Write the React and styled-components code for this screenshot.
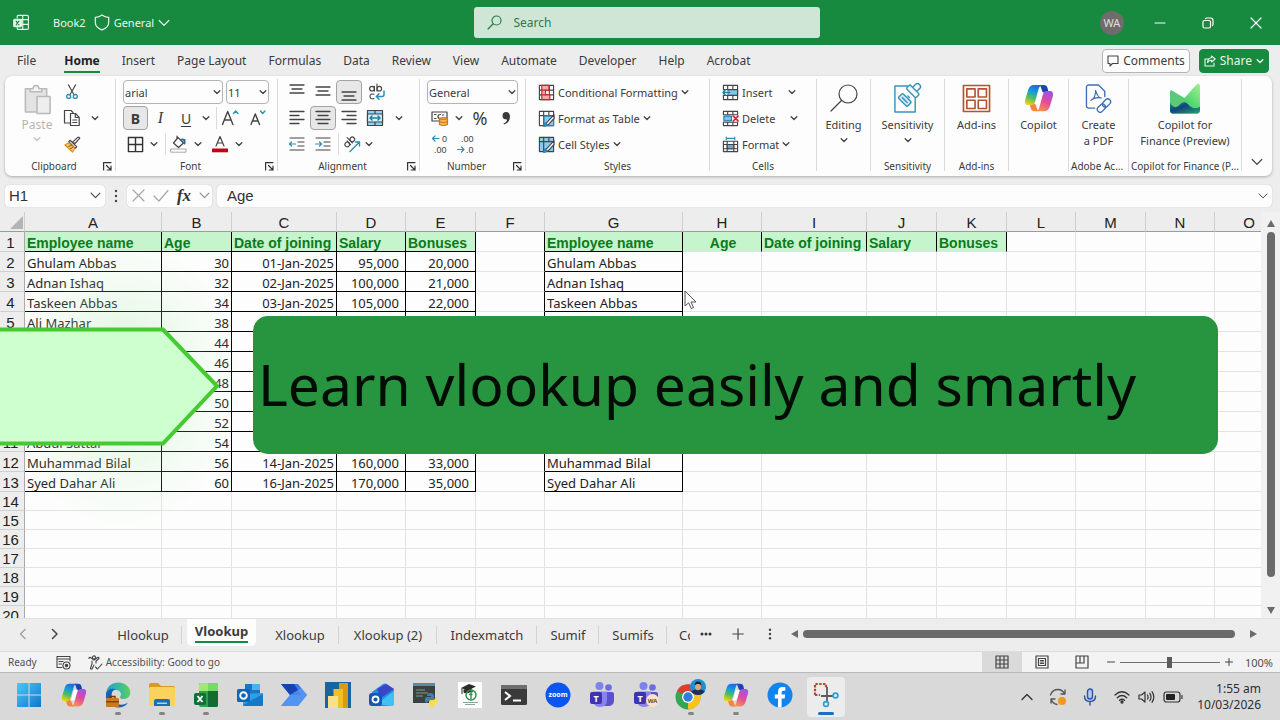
import React from "react";
import styled, { createGlobalStyle, css } from "styled-components";

const UI = `"Noto Sans", "Open Sans", sans-serif`;
const ARIAL = `"Liberation Sans", Arial, sans-serif`;
const GREEN = "#178a3f";
const INK = "#3b3b3b";

const Global = createGlobalStyle`
  * { box-sizing: border-box; }
  body { margin: 0; background: #ededed; font-family: ${UI}; color: ${INK}; }
  button, input, select { font: inherit; color: inherit; margin: 0; }
  svg { display: block; flex: none; }
`;

const Page = styled.div`
  position: relative;
  display: flex;
  flex-direction: column;
  height: 100vh;
  overflow: hidden;
  background: #ededed;
`;

const PlainButton = styled.button`
  display: flex;
  align-items: center;
  justify-content: center;
  border: 0;
  padding: 0;
  background: none;
`;

/* ---------- title bar ---------- */
const TitleBar = styled.header`
  display: grid;
  grid-template-columns: 1fr 346px 1fr;
  align-items: center;
  flex: none;
  height: 45px;
  padding-left: 13px;
  background: ${GREEN};
  color: #e9f7ed;
  font-size: 11px;
`;
const TitleLeft = styled.div`
  display: flex;
  align-items: center;
`;
const BookName = styled.span`
  margin: 0 8px 0 23px;
`;
const LabelButton = styled(PlainButton)`
  gap: 4px;
`;
const SearchBox = styled.label`
  display: flex;
  align-items: center;
  gap: 12px;
  height: 31px;
  padding-left: 13px;
  border-radius: 3px;
  background: #cfe6d7;
  color: #2b7a49;
`;
const SearchInput = styled.input`
  flex: 1;
  min-width: 0;
  border: 0;
  padding: 0;
  background: none;
  outline: 0;
  font-size: 12px;
  &::placeholder { color: #2b7a49; opacity: 1; }
`;
const TitleRight = styled.div`
  display: flex;
  align-items: center;
  justify-content: flex-end;
`;
const Avatar = styled.span`
  display: grid;
  place-items: center;
  width: 24px;
  height: 24px;
  margin-right: 12px;
  border-radius: 50%;
  background: #6f6c6b;
  color: #e2dede;
  font-size: 11px;
`;
const WindowButton = styled(PlainButton)`
  width: 48px;
  height: 45px;
`;

/* ---------- ribbon tabs ---------- */
const TabRow = styled.nav`
  display: flex;
  align-items: center;
  flex: none;
  height: 31px;
  padding: 0 11px 0 17px;
`;
const RibbonTab = styled.button`
  height: 24px;
  margin-left: ${(p) => (p.$active ? 6 : 0)}px;
  margin-right: 22px;
  padding: 2px 0 0;
  border: 0;
  border-bottom: 2px solid ${(p) => (p.$active ? GREEN : "transparent")};
  background: none;
  font-size: 12px;
  line-height: 20px;
  white-space: nowrap;
  font-weight: ${(p) => (p.$active ? 700 : 400)};
  color: ${(p) => (p.$active ? "#222" : INK)};
`;
const Spacer = styled.div`
  flex: 1;
`;
const ActionButton = styled(PlainButton)`
  height: 24px;
  gap: 4px;
  padding: 0 4px;
  margin-left: 9px;
  border: 1px solid ${(p) => (p.$primary ? GREEN : "#b5b5b5")};
  border-radius: 4px;
  background: ${(p) => (p.$primary ? GREEN : "#fdfdfd")};
  color: ${(p) => (p.$primary ? "#e9f7ed" : INK)};
  font-size: 12px;
`;

/* ---------- ribbon ---------- */
const Ribbon = styled.section`
  display: flex;
  flex: none;
  height: 100px;
  margin: 0 8px 0 5px;
  padding-top: 3px;
  border-radius: 7px;
  background: #fdfdfd;
  box-shadow: 0 1px 3px rgba(0, 0, 0, 0.28);
`;
const Group = styled.div`
  display: flex;
  flex-direction: column;
  flex: none;
  width: ${(p) => p.$w}px;
  height: 92px;
  border-right: 1px solid #dadada;
`;
const GroupBody = styled.div`
  display: flex;
  flex: none;
  height: 78px;
  padding-left: ${(p) => p.$pad || 0}px;
  justify-content: ${(p) => (p.$center ? "center" : "flex-start")};
`;
const GroupFoot = styled.div`
  display: flex;
  flex: none;
  align-items: center;
  height: 18px;
  padding-right: 2px;
  font-size: 10px;
`;
const GroupName = styled.span`
  flex: 1;
  min-width: 0;
  padding-left: 2px;
  overflow: hidden;
  white-space: nowrap;
  text-overflow: ellipsis;
  text-align: center;
`;
const Launcher = styled(PlainButton)`
  width: 12px;
  height: 16px;
`;
const Rows = styled.div`
  display: flex;
  flex-direction: column;
`;
const Row = styled.div`
  display: flex;
  align-items: center;
  height: 26px;
`;
const Tool = styled(PlainButton)`
  width: ${(p) => p.$w || 26}px;
  height: 24px;
  font-size: ${(p) => p.$size || 14}px;
  ${(p) =>
    p.$on &&
    css`
      border: 1px solid #a3a3a3;
      border-radius: 4px;
      background: #e7e7e7;
    `}
`;
const Glyph = styled.span`
  font-weight: ${(p) => (p.$bold ? 700 : 400)};
  font-style: ${(p) => (p.$italic ? "italic" : "normal")};
  font-family: ${(p) => (p.$serif ? `"Liberation Serif", serif` : UI)};
  font-size: ${(p) => (p.$serif ? 16 : 14)}px;
  text-decoration: ${(p) => (p.$underline ? "underline" : "none")};
  text-underline-offset: 2px;
`;
const Rule = styled.i`
  width: 1px;
  height: 22px;
  margin-left: ${(p) => p.$left || 0}px;
  background: #dadada;
`;
const SelectBox = styled.label`
  display: grid;
  align-items: center;
  width: ${(p) => p.$w}px;
  height: 24px;
  margin-right: 3px;
  border: 1px solid #b3b3b3;
  border-radius: 4px;
  background: #fdfdfd;
  font-size: 11px;
  > * { grid-area: 1 / 1; }
  > svg { justify-self: end; margin-right: 1px; pointer-events: none; }
`;
const Select = styled.select`
  width: 100%;
  height: 22px;
  padding: 0 0 0 1px;
  border: 0;
  background: none;
  appearance: none;
`;
const PasteButton = styled(PlainButton)`
  flex-direction: column;
  justify-content: flex-start;
  width: 44px;
  padding-top: 5px;
  color: #b5b5b5;
  font-size: 12px;
  line-height: 20px;
`;
const TextTool = styled(PlainButton)`
  justify-content: flex-start;
  gap: 3px;
  height: 26px;
  font-size: 11px;
  white-space: nowrap;
`;
const ChevronSlot = styled.span`
  margin-left: ${(p) => p.$gap || 0}px;
`;
const BigButton = styled(PlainButton)`
  flex-direction: column;
  justify-content: flex-start;
  font-size: 11px;
  line-height: 16px;
  > span { white-space: pre-line; text-align: center; }
  > svg:last-child { margin-top: 3px; }
`;
const BigIcon = styled.i`
  display: grid;
  place-items: center;
  height: 38px;
`;
const RibbonEnd = styled.div`
  display: flex;
  flex: 1;
  align-items: flex-end;
  justify-content: center;
  padding-bottom: 8px;
`;

/* ---------- formula bar ---------- */
const FormulaRow = styled.section`
  display: flex;
  flex: none;
  align-items: center;
  height: 36px;
  padding: 3px 8px 0 5px;
  font-family: ${ARIAL};
  font-size: 15px;
  color: #333;
`;
const Field = styled.label`
  display: flex;
  align-items: center;
  flex: ${(p) => (p.$w ? "none" : 1)};
  width: ${(p) => (p.$w ? p.$w + "px" : "auto")};
  height: 22px;
  padding: 0 4px;
  border-radius: 4px;
  background: #fdfdfd;
  box-shadow: 0 0 1px rgba(0, 0, 0, 0.3);
`;
const FieldInput = styled.input`
  flex: 1;
  min-width: 0;
  border: 0;
  padding: 0 0 0 ${(p) => p.$pad || 0}px;
  background: none;
  outline: 0;
`;
const Dots = styled.span`
  display: grid;
  place-items: center;
  width: 22px;
`;
const FxBox = styled.div`
  display: flex;
  align-items: center;
  justify-content: space-between;
  width: 85px;
  height: 22px;
  margin-right: 5px;
  padding: 0 2px 0 5px;
  border-radius: 4px;
  background: #fdfdfd;
  box-shadow: 0 0 1px rgba(0, 0, 0, 0.3);
`;
const Fx = styled(PlainButton)`
  font-family: "Liberation Serif", serif;
  font-style: italic;
  font-weight: 700;
  font-size: 17px;
  line-height: 20px;
`;

/* ---------- worksheet ---------- */
const SheetArea = styled.section`
  position: relative;
  display: flex;
  flex: 1;
  min-height: 0;
`;
const SheetClip = styled.div`
  flex: 1;
  min-width: 0;
  overflow: hidden;
`;
const SheetTable = styled.table`
  width: 1284px;
  table-layout: fixed;
  border-collapse: separate;
  border-spacing: 0;
  background: #fdfdfd;
`;
const ColHead = styled.th`
  height: 20px;
  padding: 3px 0 0;
  border-right: 1px solid #cfcfcf;
  border-bottom: 1px solid #9c9c9c;
  background: #ededed;
  font: 15px/16px ${ARIAL};
  vertical-align: bottom;
  color: #222;
`;
const CornerCell = styled(ColHead)`
  > svg { margin: 0 0 2px 9px; }
`;
const RowHead = styled.th`
  height: ${(p) => (p.$tall ? 20 : 19)}px;
  padding: 1px 3px 0 0;
  border-right: 1px solid #a9a9a9;
  border-bottom: 1px solid #d0d0d0;
  background: #ededed;
  font: 15px/17px ${ARIAL};
  color: #222;
`;
const Cell = styled.td`
  padding: 2px ${(p) => p.$padRight || 0}px 0 2px;
  border-right: 1px solid ${(p) => (p.$lineRight ? "#000" : "#e3e3e3")};
  border-bottom: 1px solid ${(p) => (p.$lineBottom ? "#000" : "#e3e3e3")};
  font: 13px/16px ${UI};
  color: #222;
  text-align: ${(p) => p.$align || "left"};
  white-space: nowrap;
  ${(p) =>
    p.$head &&
    css`
      background: #c6f5cd;
      color: #0b7a1c;
      font: bold 14px/16px ${ARIAL};
    `}
`;
const VScroll = styled.div`
  display: flex;
  flex-direction: column;
  align-items: center;
  width: 19px;
  padding: 8px 0 4px;
  background: #f1f1f1;
`;
const VThumb = styled.div`
  width: 8px;
  flex: 346 0 0;
  margin-top: 5px;
  border-radius: 4px;
  background: #6a6a6a;
`;
const VRest = styled.div`
  flex: 30 0 0;
`;
const Glow = styled.div`
  position: absolute;
  left: 0;
  top: 20px;
  width: 245px;
  height: 300px;
  background: radial-gradient(closest-side, rgba(130, 225, 130, 0.3), rgba(190, 240, 190, 0.16) 65%, rgba(255, 255, 255, 0));
  pointer-events: none;
`;
const ArrowShape = styled.svg`
  position: absolute;
  left: 0;
  top: 114px;
`;
const Banner = styled.div`
  position: absolute;
  left: 253px;
  right: 62px;
  top: 104px;
  height: 138px;
  padding-left: 5px;
  border-radius: 15px;
  background: #27943f;
  color: #030d06;
  font: 57px/136px ${UI};
  white-space: nowrap;
`;
const Pointer = styled.svg`
  position: absolute;
  left: 684px;
  top: 78px;
`;

/* ---------- sheet tabs ---------- */
const SheetTabs = styled.nav`
  display: flex;
  flex: none;
  align-items: stretch;
  height: 33px;
  padding-left: 7px;
  border-top: 1px solid #e0e0e0;
  background: #ededed;
  font-size: 13px;
`;
const NavButton = styled(PlainButton)`
  width: 32px;
  padding-bottom: 3px;
`;
const TabStrip = styled.div`
  display: flex;
  margin-left: 33px;
`;
const SheetTab = styled.button`
  width: ${(p) => p.$w}px;
  padding: 0;
  border: 0;
  background: linear-gradient(#d3d3d3, #d3d3d3) right center / ${(p) => (p.$edge ? 1 : 0)}px 18px no-repeat;
  white-space: nowrap;
  overflow: hidden;
  line-height: 22px;
`;
const ActiveTab = styled.button`
  display: flex;
  justify-content: center;
  width: 69px;
  height: 27px;
  margin: 0 5px;
  padding: 0;
  border: 0;
  border-radius: 0 0 5px 5px;
  background: #fdfdfd;
  font-size: 13px;
  font-weight: 700;
  > span {
    height: 24px;
    line-height: 24px;
    border-bottom: 2px solid ${GREEN};
  }
`;
const CutTab = styled(SheetTab)`
  padding-left: 12px;
  text-align: left;
`;
const TabTool = styled(PlainButton)`
  width: 32px;
  padding-bottom: 2px;
`;
const HScroll = styled.div`
  display: flex;
  flex: 1;
  align-items: center;
  padding: 0 23px 3px 5px;
`;
const HThumb = styled.div`
  flex: 1;
  height: 8px;
  margin: 0 15px 0 5px;
  border-radius: 4px;
  background: #6a6a6a;
`;

/* ---------- status bar ---------- */
const StatusBar = styled.footer`
  display: flex;
  flex: none;
  align-items: center;
  height: 21px;
  padding: 0 7px 0 8px;
  border-top: 1px solid #dcdcdc;
  background: #f3f3f3;
  font-size: 10px;
  color: #505050;
`;
const StatusItem = styled(PlainButton)`
  gap: 3px;
  margin-left: ${(p) => p.$gap || 0}px;
`;
const ViewButton = styled(PlainButton)`
  width: 40px;
  height: 20px;
  background: ${(p) => (p.$on ? "#dadada" : "none")};
`;
const ZoomRange = styled.input`
  width: 100px;
  height: 12px;
  margin: 0 5px;
  appearance: none;
  background: linear-gradient(#707070, #707070) center / 100% 1px no-repeat;
  &::-webkit-slider-thumb {
    appearance: none;
    width: 5px;
    height: 11px;
    background: #5c5c5c;
  }
`;
const ZoomText = styled.span`
  margin-left: 12px;
  font-size: 11px;
`;

/* ---------- taskbar ---------- */
const Taskbar = styled.footer`
  display: flex;
  flex: none;
  align-items: center;
  height: 48px;
  padding: 0 19px 0 6px;
  border-top: 1px solid #b9b9b9;
  background: #d9d9d9;
`;
const TaskItem = styled.button`
  display: grid;
  grid-template-rows: 4px 28px 6px;
  place-items: center;
  flex: none;
  width: ${(p) => p.$w || 44}px;
  height: 40px;
  padding: 0;
  border: 0;
  background: none;
  > svg { grid-row: 2; }
  > i {
    grid-row: 3;
    align-self: end;
    width: 6px;
    height: 3px;
    border-radius: 2px;
    background: #848484;
  }
  ${(p) =>
    p.$on &&
    css`
      width: 38px;
      margin: 0 5px;
      border-radius: 4px;
      background: #ececec;
      > i { width: 16px; background: #1c6fb8; }
    `}
`;
const Tray = styled.div`
  display: flex;
  align-items: center;
  > svg { margin-right: ${(p) => p.$gap || 0}px; }
`;
const Clock = styled.time`
  width: 70px;
  font-size: 12px;
  line-height: 16px;
  text-align: right;
  white-space: nowrap;
  color: #2e2e2e;
`;

/* ---------- icons ---------- */
const Ico = ({ w = 18, h = w, vb = "0 0 18 18", children, sw = 1.2, stroke = "#444", fill = "none" }) => (
  <svg width={w} height={h} viewBox={vb} fill={fill} stroke={stroke} strokeWidth={sw} strokeLinecap="round" strokeLinejoin="round" aria-hidden="true">
    {children}
  </svg>
);
const Chevron = ({ w = 8, color = "#444", sw = 1.4 }) => (
  <Ico w={w} vb="0 0 8 8" stroke={color} sw={sw}><path d="M1.200 2.800 4 5.400l2.800-2.600" /></Ico>
);
const WideChevron = ({ w = 12, color = "#444", sw = 1.2 }) => (
  <Ico w={w} vb="0 0 12 12" stroke={color} sw={sw}><path d="M1.2 3.5 6 8.3l4.800-4.800" /></Ico>
);
const LauncherIcon = () => (
  <Ico w={9} vb="0 0 9 9" sw={1.2} stroke="#333"><path d="M.6 8V.6H8M3.5 3.5 8 8M8 4.2V8H4.2" /></Ico>
);
const ExcelMark = () => (
  <Ico w={17} stroke="#e9f7ed" sw={1.2}>
    <path d="M4.5 4V2.500q0-1 1-1H15q1.300 0 1.300 1.300V15q0 1.300-1.300 1.300H5.500q-1 0-1-1V14M10.300 1.500v14.800M4.500 6h11.800M10 11h6.300" />
    <rect x=".8" y="5.500" width="8" height="8" rx="1" fill="#e9f7ed" />
    <path d="m3.300 7.500 3 4M6.300 7.500l-3 4" stroke={GREEN} />
  </Ico>
);
const Shield = () => (
  <Ico w={16} h={17} vb="0 0 16 17" stroke="#e9f7ed"><path d="M8 1c2 1.600 4.200 2.300 6.700 2.300v4.900c0 3.700-2.300 6.100-6.700 7.700-4.400-1.600-6.700-4-6.700-7.700V3.300C3.800 3.300 6 2.600 8 1Z" /></Ico>
);
const Magnifier = ({ w = 15, color = "#2b7a49", sw = 1.2 }) => (
  <Ico w={w} vb="0 0 30 30" stroke={color} sw={(sw * 30) / w}><circle cx="19" cy="11" r="9" /><path d="M12.500 17.500 2 28" /></Ico>
);
const PasteIcon = () => (
  <Ico w={30} h={31} vb="0 0 30 32" stroke="#b9b9b9" sw={1.6}>
    <path d="M14 29H3V5h22v7" fill="#e3e3e3" />
    <path d="M8 8V5h3q0-3.500 3-3.500T17 5h3v3z" fill="#f4f4f4" />
    <rect x="15" y="13" width="13.500" height="17.500" fill="#eee" />
  </Ico>
);
const CutIcon = () => (
  <Ico w={16}><path d="m5 1 6.300 11M13 1 6.700 12" /><g stroke="#2c8fb8" strokeWidth="1.500"><circle cx="5.300" cy="14" r="2.200" /><circle cx="12.700" cy="14" r="2.200" /></g></Ico>
);
const CopyIcon = () => (
  <Ico w={18}><path d="M7 14H1.500V1.500H8L10 3.500M7.500 4.500h5l3.700 3.800v8.200H7.500zM12.300 4.700v3.800h3.700M9.800 11h4M9.800 13.500h4" /></Ico>
);
const PainterIcon = () => (
  <Ico w={17}><path d="m9 6.500 5.500-5q1.500-.8 2.200.8l-5 5.700z" fill="#eee" /><path d="m6.500 4.500 7 7-1.500 1.500-7-7z" fill="#fff" /><path d="M5 7 1 9.500l8 7.500 2.700-4z" stroke="#d98a1c" fill="#f7c67c" /><path d="m5 11 3-1.500M7 13.500l2-1.500" stroke="#a4600a" /></Ico>
);
const AFont = ({ up, big }) => (
  <Ico w={18} sw={1.400}><path d={big ? "M1.500 15.500 6.700 2.500l5.200 13M3.300 11h6.800" : "M3 15.500 7.300 5l4.200 10.500M4.500 12h5.500"} /><path d={up ? "m12.500 4.500 2.200-2.500 2.200 2.500" : "m12.500 2 2.200 2.500L16.900 2"} stroke="#2c8fb8" /></Ico>
);
const BordersIcon = () => (<Ico w={17} sw={1.5} stroke="#333"><path d="M1.500 1.500h15v15h-15zM9 1.500v15M1.500 9h15" /></Ico>);
const FillIcon = () => (
  <Ico w={18}><path d="m8 2.500 5.500 5.500-5 4.500L3.500 8zM7 4V1" /><path d="M14.500 8.500V5l-2.500-.5" stroke="#2c6d94" strokeWidth="2" /><rect x="1" y="14" width="15" height="3.200" stroke="#aaa" fill="#fff" strokeWidth="1" /></Ico>
);
const FontColorIcon = () => (
  <Ico w={18}><path d="M5 11 9 1.500 13 11M6.300 8h5.400" /><rect x="1" y="13.500" width="16" height="3.800" fill="#c00412" stroke="none" /></Ico>
);
const Lines = ({ rows }) => (
  <Ico w={18} sw={1.3}>{rows.map(([x1, x2, y], i) => <path key={i} d={`M${x1} ${y}H${x2}`} />)}</Ico>
);
const WrapIcon = () => (
  <Ico w={18} sw={1.1}>
    <circle cx="4" cy="5.700" r="2.300" /><path d="M6.400 3.300v4.800M9 1v7" /><circle cx="11.300" cy="5.700" r="2.300" />
    <path d="M6 11.300q-4-1.300-4 2t4 2.200" /><path d="M16 8v3.500q0 2-2 2H8.500m2.500-2.700-2.700 2.700 2.700 2.700" stroke="#2c8fb8" strokeWidth="1.500" />
  </Ico>
);
const MergeIcon = () => (
  <Ico w={18}><rect x="1.500" y="1.500" width="15" height="15" fill="#8fd0ee" /><path d="M9 1.500V5M9 13v3.500" /><rect x="1.500" y="5" width="15" height="8" fill="#d7f0fb" /><path d="M4 9h10M6 7 4 9l2 2M12 7l2 2-2 2" stroke="#1f7ea8" strokeWidth="1.500" /></Ico>
);
const IndentIcon = ({ out }) => (
  <Ico w={18} sw={1.2}><path d="M2 3h14M10 7h6M10 11h6M2 15h14" /><path d={out ? "M7.500 9h-6m2-2-2 2 2 2" : "M1.500 9h6m-2-2 2 2-2 2"} stroke="#2c8fb8" /></Ico>
);
const OrientIcon = () => (
  <Ico w={18} sw={1.1}><g transform="rotate(-45 6 7)"><circle cx="3" cy="7.500" r="2.300" /><path d="M5.400 5v5M7.800 2.500V10" /><circle cx="10.200" cy="7.500" r="2.300" /></g><path d="M7 16.500 16.500 7m-4 0h4v4" stroke="#2c8fb8" strokeWidth="1.400" /></Ico>
);
const MoneyIcon = () => (
  <Ico w={18}><rect x="1" y="3" width="15" height="9" /><path d="M3.500 5.500H5M3.500 9.500H5M9.500 5.500q-2.500 0-2.500 2t2 2M12 5.500v1" /><path d="M8.500 9.500q4-2 8 0v6q-4 2-8 0z" fill="#f6b45a" stroke="#c97812" /><path d="M8.500 9.500q4 2 8 0M8.500 12.500q4 2 8 0" stroke="#c97812" /></Ico>
);
const Dec = styled.text`
  font: 9px ${ARIAL};
  fill: #444;
  stroke: none;
`;
const DecimalIcon = ({ inc }) => (
  <Ico w={20} h={22} vb="0 0 20 22">
    {inc ? (
      <><Dec x="12" y="9">0</Dec><Dec x="4" y="20">.00</Dec><path d="M9 5.500H2.500M5 3 2.500 5.500 5 8" stroke="#2c8fb8" /></>
    ) : (
      <><Dec x="5" y="9">.00</Dec><Dec x="10" y="20">.0</Dec><path d="M1.500 16.500H8M5.500 14 8 16.500 5.500 19" stroke="#2c8fb8" /></>
    )}
  </Ico>
);
const CondIcon = () => (
  <Ico w={17} sw={1.2}><path d="M1.500 1.500h15v15h-15zM1.500 6.500h15M1.500 11.500h15M6 1.500v15M12 1.500v15" /><path d="M4 1.500h7.500v5H8v5h4.500v5H4z" fill="#f7a8ae" stroke="#d3202f" /><path d="M4 6.500h4M4 11.500h4" stroke="#d3202f" /></Ico>
);
const TableBrush = ({ style }) => (
  <Ico w={17} sw={1.2}><path d="M1.500 1.500h15v15h-15z" fill={style ? "#8cc9ee" : "#fff"} /><path d="M1.500 6h15M6 1.500v15M11.500 1.500V6" />{!style && <path d="M6.500 6.500h10v10h-10z" fill="#8cc9ee" stroke="#2f87bd" />}<path d="M17 5 9.500 13l-2.500 4 4-1.500L17 9z" fill="#fff" /><path d="m6 17.500 1.500-4 2.500 2z" fill="#2f87bd" stroke="#2f87bd" /></Ico>
);
const InsertIcon = () => (
  <Ico w={17} sw={1.2}><path d="M1.500 1.500h15v15h-15zM1.500 6h15M1.500 12h15M6 1.500v15M11.500 1.500v15" /><rect x="6" y="6" width="10.500" height="6" fill="#7fc3ef" /><path d="M0 6.700h6v4.600H0z" fill="#fff" stroke="none" /><path d="M8 9H1m2.800-2.800L1 9l2.800 2.800" stroke="#1f7ea8" strokeWidth="1.500" /></Ico>
);
const DeleteIcon = () => (
  <Ico w={17} sw={1.2}><path d="M1.500 1.500h15V5h-15zM1.500 13h15v3.500h-15zM6 1.500V5M11.500 1.500V5M6 13v3.500M11.500 13v3.500" /><rect x="2" y="6.500" width="8" height="5" fill="#7fc3ef" stroke="#2778ad" /><path d="m12 6.500 5 5M17 6.500l-5 5" stroke="#d3202f" strokeWidth="1.700" /></Ico>
);
const FormatIcon = () => (
  <Ico w={17} sw={1.2}><path d="M1.500 5.500h15v11h-15zM1.500 9h15M1.500 13.500h15M5.500 5.500v11M12.500 5.500v11" /><rect x="5.500" y="9" width="7" height="4.500" fill="#5aaeea" /><path d="M4.500 1v3M13.500 1v3M4.500 2.500h9" stroke="#2c8fb8" /></Ico>
);
const SensitivityIcon = () => (
  <Ico w={29} h={31} vb="0 0 30 32" stroke="#3a93bd" sw={1.5}>
    <path d="M15 3H2v27h21V16" />
    <g transform="rotate(45 21 8)" fill="#fdfdfd"><rect x="18" y="-1" width="6" height="9" rx="2.500" /><rect x="14" y="6" width="14" height="5.500" rx="1.500" /></g>
    <path d="M15.500 13.500 17 15" />
    <g transform="rotate(45 12 17)"><rect x="6" y="14" width="13" height="6.500" rx="1" fill="#d5ecf6" /><path d="M9 17.300h7" /></g>
  </Ico>
);
const AddInsIcon = () => (
  <Ico w={29} vb="0 0 30 30" stroke="#b5532f" sw={1.7}><path d="M1.500 1.500h27v27h-27z" /><path d="M5 5h8.500v8.500H5zM16.800 5h8.500v8.500h-8.500zM5 16.800h8.500v8.500H5zM16.800 16.800h8.500v8.500h-8.500z" /></Ico>
);
const Copilot = ({ w = 30, id }) => (
  <svg width={w} height={w} viewBox="0 0 32 32" aria-hidden="true">
    <defs>
      <linearGradient id={id + "a"} x1=".6" y1="0" x2=".3" y2="1"><stop offset="0" stopColor="#1f68dc" /><stop offset=".35" stopColor="#159ddb" /><stop offset=".65" stopColor="#4fbf5a" /><stop offset="1" stopColor="#f3cf1c" /></linearGradient>
      <linearGradient id={id + "b"} x1=".7" y1="0" x2=".3" y2="1"><stop offset="0" stopColor="#9a55e8" /><stop offset=".5" stopColor="#e3499c" /><stop offset="1" stopColor="#fb9150" /></linearGradient>
      <linearGradient id={id + "c"} x1="0" y1="0" x2="1" y2="1"><stop offset="0" stopColor="#1a4fc4" /><stop offset="1" stopColor="#153a9c" /></linearGradient>
    </defs>
    <path d="M17 2h4.200c2 0 3.200 1 3.800 3l1.200 5H20z" fill={`url(#${id}c)`} />
    <path d="M15 30h-4c-2 0-3.200-1-3.800-3L6 22h6z" fill="#f7843c" />
    <path d="M10.500 2H19c-2 .6-2.900 2.400-3.600 5l-3.600 13c-.7 2.500-2 3.500-4.300 3.500H4.600C1.500 23.500.4 21.300 1.200 18L4.500 7C5.500 3.700 7.500 2 10.500 2Z" fill={`url(#${id}a)`} />
    <path d="M21.500 30H13c2-.6 2.900-2.400 3.600-5l3.600-13c.7-2.500 2-3.500 4.300-3.500h2.900c3.100 0 4.200 2.200 3.400 5.500L27.500 25c-1 3.300-3 5-6 5Z" fill={`url(#${id}b)`} />
    <path d="M17 9.500h3.800q-1 1.500-1.600 4l-1.600 5.500q-.9 3-2.600 3.700h-3.700q1.200-1.200 1.900-3.700l1.700-6q.7-2.700 2.100-3.500z" fill="#fff" />
  </svg>
);
const PdfIcon = () => (
  <Ico w={27} h={29} vb="0 0 28 30" stroke="#3b70b8" sw={1.4}>
    <path d="M10 25H4q-2.500 0-2.500-2.500v-19Q1.500 1 4 1h10l6.500 6.500V13" />
    <path d="M6 17q5-2 5-10.500Q13 14 17 14.500 10 13 6 17Z" strokeWidth="1.200" />
    <g transform="rotate(-45 20 22)"><rect x="11" y="19" width="9.500" height="6" rx="3" /><rect x="18.500" y="19" width="9.500" height="6" rx="3" /></g>
  </Ico>
);
const FinanceIcon = () => (
  <svg width="30" height="31" viewBox="0 0 31 31" aria-hidden="true">
    <defs>
      <linearGradient id="fin1" x1="0" y1="0" x2="1" y2="1"><stop offset="0" stopColor="#1d8c80" /><stop offset=".4" stopColor="#12447f" /><stop offset="1" stopColor="#27a46f" /></linearGradient>
      <linearGradient id="fin2" x1="1" y1="0" x2="0" y2="1"><stop offset="0" stopColor="#a2f08c" /><stop offset=".5" stopColor="#4fd673" /><stop offset="1" stopColor="#2fb86a" /></linearGradient>
    </defs>
    <path d="M0 9q0-3 3-1l12 7L27 1.500q4-3 4 2V27q0 4-4 4H4q-4 0-4-4z" fill="url(#fin2)" />
    <path d="M0 9q0-3 3-1l10 7 4 5-8 8-9 2z" fill="#5cc878" />
    <path d="M0 20q5 8 10 2 5-5 9 0 5 6 12 2v3q0 4-4 4H4q-4 0-4-4z" fill="url(#fin1)" />
  </svg>
);

/* taskbar logos */
const T = ({ children, w = 26 }) => <svg width={w} height={w} viewBox="0 0 26 26" aria-hidden="true">{children}</svg>;
const LogoText = styled.text`
  font: bold ${(p) => p.$s || 9}px ${UI};
  fill: ${(p) => p.$c || "#fff"};
  text-anchor: middle;
`;
const WindowsLogo = () => (
  <T><defs><linearGradient id="wn" x1="0" y1="0" x2="1" y2="1"><stop offset="0" stopColor="#4fc6f3" /><stop offset="1" stopColor="#0f77cc" /></linearGradient></defs><path d="M1 1h11.500v11.500H1zM13.500 1H25v11.500H13.500zM1 13.500h11.500V25H1zM13.500 13.500H25V25H13.500z" fill="url(#wn)" /></T>
);
const EdgeLogo = () => (
  <T><defs><linearGradient id="ed" x1="0" y1=".3" x2="1" y2=".2"><stop offset="0" stopColor="#1c9fde" /><stop offset="1" stopColor="#5ad35a" /></linearGradient></defs>
    <path d="M1 12C2 4 7 .500 13.500.500 20 .500 25.300 5 25.300 10.500c0 4-3 6.500-6.500 6.500-3 0-4.500-1.200-3.500-2.500 2-3-.3-6.500-4.300-6.500-5 0-8 4-8 8z" fill="url(#ed)" />
    <path d="M1 12c1-4 5-6 9.500-5-3 1-4.500 4-3.500 8 1 5 6 8.500 11 7.500 2-.4 3.500-1 5-2-2 3.500-5.500 5-9.500 5C6 25.500 0 20 1 12z" fill="#1561b5" />
    <path d="M5 16v-1.500h5V16" fill="none" stroke="#6e3b0a" strokeWidth="1.500" /><rect x="1" y="16" width="13" height="9" rx="1" fill="#c97a1c" /><path d="M1 19h13v1.500H1z" fill="#7e460c" /></T>
);
const FolderLogo = () => (
  <T><path d="M0 3q0-2 2-2h7l3 3h12q2 0 2 2v6H0z" fill="#d69a1f" /><rect y="5" width="26" height="19" rx="1.500" fill="#fbd25c" /><path d="M5 24v-5q0-2 2-2h12q2 0 2 2v5z" fill="#1b6fb5" /><path d="M8 20.500h10V22H8z" fill="#a9d4f5" /></T>
);
const ExcelLogo = () => (
  <T><path d="M6 3q0-2 2-2h15q2 0 2 2v20q0 2-2 2H8q-2 0-2-2z" fill="#2fa04c" /><path d="M15 1h8q2 0 2 2v6H15z" fill="#74dc66" /><path d="M6 3q0-2 2-2h7v8H6z" fill="#a0e871" /><path d="M15 9h10v14q0 2-2 2h-8z" fill="#146b34" /><rect x="1" y="11" width="12" height="12" rx="2" fill="#0f7137" /><path d="m4.500 14 5 6M9.500 14l-5 6" stroke="#fff" strokeWidth="1.800" /></T>
);
const OutlookLogo = () => (
  <T><path d="M8 2h15v10H8z" fill="#1b74c8" /><path d="M15 2h8v6h-8z" fill="#48b4ee" /><path d="m6 12 20-1v12q0 1-1 1H7q-1 0-1-1z" fill="#2aa1e5" /><path d="m6 23 20-11v11q0 1-1 1H7z" fill="#1679c7" /><rect x="0" y="7" width="13" height="13" rx="1.500" fill="#1066b8" /><circle cx="6.500" cy="13.500" r="3.300" fill="none" stroke="#fff" strokeWidth="1.900" /></T>
);
const FlowLogo = () => (
  <T><path d="M0 2h17l9 11-9 11H0l9-11z" fill="#3b78e8" /><path d="M0 2h13l7 11H9z" fill="#1642b2" /><path d="M20 6l6 7-9 11H0l9-11z" fill="#5b9df5" opacity=".75" /></T>
);
const PowerBiLogo = () => (
  <T><path d="M0 0h26v26H0z" fill="#17649f" /><path d="M14 1h9v25h-9z" fill="#d79a13" /><path d="M8.500 7H18v19H8.500z" fill="#f0bf2b" /><path d="M3 14h10v12H3z" fill="#fbe08c" /></T>
);
const MailLogo = () => (
  <T><path d="M3 10 14 2q2-1 4 .300l7 4.700v14q0 3-3 3H6q-3 0-3-3z" fill="#2a8be4" /><path d="m8 7 9-5 8 5-13 9z" fill="#3a46c8" /><path d="m25 9-17 13 14 2q3 0 3-3z" fill="#3fc1f5" /><rect x="0" y="11" width="13" height="13" rx="3" fill="#1158b8" /><circle cx="6.500" cy="17.500" r="3" fill="none" stroke="#fff" strokeWidth="1.800" /></T>
);
const PythonLogo = () => (
  <T><rect x="0" y="1" width="22" height="20" fill="#3a4241" /><path d="M0 1h22v3H0z" fill="#5d8aa0" /><path d="M3 8h9M3 11h12M3 14h7" stroke="#7da089" strokeWidth="1" /><path d="M12 20v-3q0-2 2-2h4v-1h-4q0-3 3.500-3t3.500 3v3q0 2-2 2h-3q-2 0-2 2z" fill="#3f7fb5" /><path d="M25 15v4q0 2-2 2h-4v1h3q0 3.500-3 3.500t-3-3V20q0-2 2-2h2q2 0 2-2v-1z" fill="#f7dc55" /></T>
);
const SchoolLogo = () => (
  <T><path d="M1 0h24v26H1z" fill="#fdfdfd" /><path d="m4 6 8-4 7 2.500-8 4z" fill="#2b2b2b" /><path d="M7 7.500v3q3 1 7-1V6M5 6v6" stroke="#2b2b2b" fill="#2b2b2b" /><circle cx="14" cy="13" r="5" fill="none" stroke="#2f9147" strokeWidth="1.500" /><path d="M14 17v-6q0-1.500 2-1.500M12 12.500h3.500" stroke="#2f9147" strokeWidth="1.400" fill="none" /><path d="M6 20.500h15M8 22.500h10" stroke="#8aa891" strokeWidth="1" /></T>
);
const TerminalLogo = () => (
  <T><rect x="0" y="3" width="26" height="20" rx="1.500" fill="#3a3a3a" /><path d="M0 3h26v4H0z" fill="#6e6e6e" /><path d="m4 10 5 4-5 4M12 18.500h8" stroke="#fff" strokeWidth="2" fill="none" /></T>
);
const ZoomLogo = () => (<T><circle cx="13" cy="13" r="12.500" fill="#0c55ee" /><LogoText x="13" y="15" $s={7}>zoom</LogoText></T>);
const TeamsLogo = ({ badge }) => (
  <T><circle cx="19.500" cy="5.500" r="3.300" fill="#6a6fe0" /><circle cx="10.500" cy="4" r="4" fill="#7c83ee" /><path d="M14 10h9q2 0 2 2v6q0 6-6 6h-5z" fill="#5b50cf" /><path d="M4 9.500h14V18q0 7-7 7t-7-7z" fill="#8a83ee" /><rect x="1" y="10" width="12" height="12" rx="2" fill="#3f34b0" /><LogoText x="7" y="19.500" $s={9}>T</LogoText>
    {badge && (<><circle cx="19.500" cy="18.500" r="6.500" fill="#f6e3c9" /><LogoText x="19.500" y="21" $s={6} $c="#7a4a22">WA</LogoText></>)}</T>
);
const ChromeLogo = () => (
  <svg width="32" height="32" viewBox="0 0 32 32" aria-hidden="true">
    <circle cx="13" cy="18" r="12.500" fill="#33a651" /><path d="M13 18 2.200 11.700A12.500 12.500 0 0 1 24 11.700z" fill="#e33b2e" /><path d="M13 18l11-6.300A12.500 12.500 0 0 1 13 30.500z" fill="#f8c31c" /><circle cx="13" cy="18" r="6" fill="#fff" /><circle cx="13" cy="18" r="4.700" fill="#2f7de0" />
    <circle cx="23" cy="8" r="8" fill="#1f8fd4" /><path d="M16 12.500q2.500-2.300 7-2.300t7 2.300Q27 16 23 16t-7-3.500z" fill="#24304e" /><ellipse cx="23" cy="7.500" rx="3" ry="3.800" fill="#d6a583" /><path d="M19.700 6.500q0-4 3.300-4t3.300 4q-1.500-1.700-3.300-1.700t-3.300 1.700z" fill="#1c1a1a" />
  </svg>
);
const FacebookLogo = () => (
  <T><circle cx="13" cy="13" r="12.500" fill="#1184ee" /><path d="M11 25.500v-9H7.800V12.500H11v-2.800Q11 5 15.500 5h2.800v3.800h-2q-1.700 0-1.700 1.700v2h3.600l-.6 4h-3v9z" fill="#fff" /></T>
);
const SnipLogo = () => (
  <T><path d="M2 13V2h11v4M2 13h5" fill="none" stroke="#b3492c" strokeWidth="2.200" strokeDasharray="2.400 1.400" /><path d="M14 5v15M8 14h13" stroke="#5c5c5c" strokeWidth="1.800" /><g fill="none" stroke="#2d9fd0" strokeWidth="1.700"><circle cx="13" cy="22" r="2.400" /><circle cx="22.500" cy="13.500" r="2.400" /></g></T>
);

/* ---------- data ---------- */
const TABS = ["File", "Home", "Insert", "Page Layout", "Formulas", "Data", "Review", "View", "Automate", "Developer", "Help", "Acrobat"];
const COLUMNS = [
  ["A", 137], ["B", 70], ["C", 105], ["D", 69], ["E", 70], ["F", 69], ["G", 138], ["H", 79],
  ["I", 105], ["J", 70], ["K", 70], ["L", 69], ["M", 70], ["N", 69], ["O", 69],
];
const HEAD = {
  A: "Employee name", B: "Age", C: "Date of joining", D: "Salary", E: "Bonuses",
  G: "Employee name", H: "Age", I: "Date of joining", J: "Salary", K: "Bonuses",
};
const DATA = {
  1: HEAD,
  2: { A: "Ghulam Abbas", B: "30", C: "01-Jan-2025", D: "95,000", E: "20,000", G: "Ghulam Abbas" },
  3: { A: "Adnan Ishaq", B: "32", C: "02-Jan-2025", D: "100,000", E: "21,000", G: "Adnan Ishaq" },
  4: { A: "Taskeen Abbas", B: "34", C: "03-Jan-2025", D: "105,000", E: "22,000", G: "Taskeen Abbas" },
  5: { A: "Ali Mazhar", B: "38" },
  6: { B: "44" },
  7: { B: "46" },
  8: { B: "48" },
  9: { B: "50" },
  10: { B: "52" },
  11: { A: "Abdul Sattar", B: "54" },
  12: { A: "Muhammad Bilal", B: "56", C: "14-Jan-2025", D: "160,000", E: "33,000", G: "Muhammad Bilal" },
  13: { A: "Syed Dahar Ali", B: "60", C: "16-Jan-2025", D: "170,000", E: "35,000", G: "Syed Dahar Ali" },
};
const ROWS = Array.from({ length: 20 }, (_, i) => i + 1);

function cellProps(col, row) {
  const inData = row <= 13;
  const boxed = "ABCDEG".includes(col);
  return {
    $head: row === 1 && HEAD[col],
    $lineRight: inData && (boxed || col === "F" || (row === 1 && "IJKH".includes(col))),
    $lineBottom: inData && boxed,
    $align: row === 1 ? (col === "H" ? "center" : "left") : "BCDE".includes(col) ? "right" : "left",
    $padRight: row > 1 ? ("DE".includes(col) ? 6 : 2) : 0,
  };
}

const Combo = ({ w, label, value }) => (
  <SelectBox $w={w}>
    <Select aria-label={label} defaultValue={value}><option>{value}</option></Select>
    <Chevron />
  </SelectBox>
);
const RibbonGroup = ({ w, name, launcher, children, pad, center }) => (
  <Group $w={w}>
    <GroupBody $pad={pad} $center={center}>{children}</GroupBody>
    <GroupFoot>
      <GroupName>{name}</GroupName>
      {launcher && <Launcher aria-label={`${name} settings`}><LauncherIcon /></Launcher>}
    </GroupFoot>
  </Group>
);
const Big = ({ icon, text, chevron }) => (
  <BigButton><BigIcon>{icon}</BigIcon><span>{text}</span>{chevron && <Chevron />}</BigButton>
);
const Labeled = ({ icon, text, gap }) => (
  <TextTool>{icon}<span>{text}</span><ChevronSlot $gap={gap}><Chevron /></ChevronSlot></TextTool>
);

const TASKS = [
  ["Start", <WindowsLogo />, { w: 46 }],
  ["Copilot", <Copilot w={26} id="t1" />, {}],
  ["Edge", <EdgeLogo />, { run: true }],
  ["File Explorer", <FolderLogo />, { run: true }],
  ["Excel", <ExcelLogo />, { run: true }],
  ["Outlook", <OutlookLogo />, {}],
  ["Power Automate", <FlowLogo />, {}],
  ["Power BI", <PowerBiLogo />, {}],
  ["Mail", <MailLogo />, {}],
  ["Python", <PythonLogo />, {}],
  ["School", <SchoolLogo />, {}],
  ["Terminal", <TerminalLogo />, {}],
  ["Zoom", <ZoomLogo />, {}],
  ["Teams", <TeamsLogo />, {}],
  ["Teams work account", <TeamsLogo badge />, {}],
  ["Chrome", <ChromeLogo />, { run: true, w: 46 }],
  ["Copilot app", <Copilot w={26} id="t2" />, { run: true }],
  ["Facebook", <FacebookLogo />, {}],
  ["Snipping Tool", <SnipLogo />, { run: true, on: true }],
];

export default function App() {
  return (
    <Page>
      <Global />
      <TitleBar>
        <TitleLeft>
          <ExcelMark />
          <BookName>Book2</BookName>
          <LabelButton><Shield />General<WideChevron color="#e9f7ed" /></LabelButton>
        </TitleLeft>
        <SearchBox>
          <Magnifier w={15} />
          <SearchInput type="text" placeholder="Search" aria-label="Search" />
        </SearchBox>
        <TitleRight>
          <Avatar>WA</Avatar>
          <WindowButton aria-label="Minimize"><Ico w={12} vb="0 0 12 12" stroke="#fff"><path d="M1 6h10" /></Ico></WindowButton>
          <WindowButton aria-label="Restore"><Ico w={12} vb="0 0 12 12" stroke="#fff"><rect x="1" y="3.500" width="7.500" height="7.500" rx="1.500" /><path d="M3.500 1.500Q4 1 5 1h3.500Q11 1 11 3.500V7q0 1-.5 1.500" /></Ico></WindowButton>
          <WindowButton aria-label="Close"><Ico w={12} vb="0 0 12 12" stroke="#fff"><path d="m1 1 10 10M11 1 1 11" /></Ico></WindowButton>
        </TitleRight>
      </TitleBar>

      <TabRow>
        {TABS.map((t) => <RibbonTab key={t} $active={t === "Home"}>{t}</RibbonTab>)}
        <Spacer />
        <ActionButton><Ico w={12} vb="0 0 12 12" sw={1.1}><path d="M1 1h10v7.500H5.500L3 11V8.500H1z" /></Ico>Comments</ActionButton>
        <ActionButton $primary><Ico w={12} vb="0 0 12 12" sw={1.1} stroke="#e9f7ed"><path d="M4.500 4H1v7h9V8M7.500 1l3.700 3-3.700 3V5.200Q5 5.200 3.500 7.500 4 3 7.500 2.800z" /></Ico>Share<Chevron color="#e9f7ed" /></ActionButton>
      </TabRow>

      <Ribbon>
        <RibbonGroup w={111} name="Clipboard" launcher pad={10}>
          <PasteButton><PasteIcon /><span>Paste</span><Chevron color="#c4c4c4" /></PasteButton>
          <Rows>
            <Row><Tool aria-label="Cut"><CutIcon /></Tool></Row>
            <Row><Tool aria-label="Copy"><CopyIcon /></Tool><Tool $w={20} aria-label="Copy options"><Chevron /></Tool></Row>
            <Row><Tool aria-label="Format painter"><PainterIcon /></Tool></Row>
          </Rows>
        </RibbonGroup>

        <RibbonGroup w={162} name="Font" launcher pad={7}>
          <Rows>
            <Row><Combo w={100} label="Font" value="arial" /><Combo w={43} label="Font size" value="11" /></Row>
            <Row>
              <Tool $w={25} $on><Glyph $bold>B</Glyph></Tool>
              <Tool $w={25}><Glyph $italic $serif>I</Glyph></Tool>
              <Tool><Glyph $underline>U</Glyph></Tool>
              <Tool $w={13} aria-label="Underline style"><Chevron /></Tool>
              <Rule $left={4} />
              <Tool aria-label="Increase font size"><AFont up big /></Tool>
              <Tool $w={28} aria-label="Decrease font size"><AFont /></Tool>
            </Row>
            <Row>
              <Tool $w={24} aria-label="Borders"><BordersIcon /></Tool>
              <Tool $w={14} aria-label="Border options"><Chevron /></Tool>
              <Rule $left={4} />
              <Tool aria-label="Fill color"><FillIcon /></Tool>
              <Tool $w={12} aria-label="Fill options"><Chevron /></Tool>
              <Tool $w={32} aria-label="Font color"><FontColorIcon /></Tool>
              <Tool $w={6} aria-label="Font color options"><Chevron /></Tool>
            </Row>
          </Rows>
        </RibbonGroup>

        <RibbonGroup w={142} name="Alignment" launcher pad={6}>
          <Rows>
            <Row>
              <Tool aria-label="Top align"><Lines rows={[[2, 16, 2], [4, 14, 6], [2, 16, 10]]} /></Tool>
              <Tool aria-label="Middle align"><Lines rows={[[2, 16, 4], [4, 14, 8], [2, 16, 12]]} /></Tool>
              <Tool $on aria-label="Bottom align"><Lines rows={[[2, 16, 9], [4, 14, 13], [2, 16, 17]]} /></Tool>
              <Tool $w={30} aria-label="Wrap text"><WrapIcon /></Tool>
            </Row>
            <Row>
              <Tool aria-label="Align left"><Lines rows={[[2, 16, 2.5], [2, 11, 6.5], [2, 16, 10.5], [2, 11, 14.5]]} /></Tool>
              <Tool $on aria-label="Center"><Lines rows={[[2, 16, 2.5], [4, 14, 6.5], [2, 16, 10.5], [4, 14, 14.5]]} /></Tool>
              <Tool aria-label="Align right"><Lines rows={[[2, 16, 2.5], [7, 16, 6.5], [2, 16, 10.5], [7, 16, 14.5]]} /></Tool>
              <Tool aria-label="Merge and center"><MergeIcon /></Tool>
              <Tool $w={22} aria-label="Merge options"><Chevron /></Tool>
            </Row>
            <Row>
              <Tool aria-label="Decrease indent"><IndentIcon out /></Tool>
              <Tool aria-label="Increase indent"><IndentIcon /></Tool>
              <Rule $left={2} />
              <Tool aria-label="Orientation"><OrientIcon /></Tool>
              <Tool $w={8} aria-label="Orientation options"><Chevron /></Tool>
            </Row>
          </Rows>
        </RibbonGroup>

        <RibbonGroup w={106} name="Number" launcher pad={7}>
          <Rows>
            <Row><Combo w={91} label="Number format" value="General" /></Row>
            <Row>
              <Tool aria-label="Accounting format"><MoneyIcon /></Tool>
              <Tool $w={11} aria-label="Accounting options"><Chevron /></Tool>
              <Tool $w={32} $size={18}>%</Tool>
              <Tool $w={20} aria-label="Comma style"><Ico w={14} vb="0 0 14 14" stroke="none" fill="#3a3a3a"><path d="M7 1q4 0 4 4.500 0 6-6 8l-.5-1Q8 11 8 8.500 3.500 8.500 3.500 5 3.500 1 7 1z" /></Ico></Tool>
            </Row>
            <Row>
              <Tool aria-label="Increase decimal"><DecimalIcon inc /></Tool>
              <Tool aria-label="Decrease decimal"><DecimalIcon /></Tool>
            </Row>
          </Rows>
        </RibbonGroup>

        <RibbonGroup w={184} name="Styles" pad={12}>
          <Rows>
            <Labeled icon={<CondIcon />} text="Conditional Formatting" />
            <Labeled icon={<TableBrush />} text="Format as Table" />
            <Labeled icon={<TableBrush style />} text="Cell Styles" />
          </Rows>
        </RibbonGroup>

        <RibbonGroup w={107} name="Cells" pad={12}>
          <Rows>
            <Labeled icon={<InsertIcon />} text="Insert" gap={12} />
            <Labeled icon={<DeleteIcon />} text="Delete" gap={12} />
            <Labeled icon={<FormatIcon />} text="Format" />
          </Rows>
        </RibbonGroup>

        <RibbonGroup w={54} center><Big icon={<Magnifier w={30} color="#444" />} text="Editing" chevron /></RibbonGroup>
        <RibbonGroup w={74} name="Sensitivity" center><Big icon={<SensitivityIcon />} text="Sensitivity" chevron /></RibbonGroup>
        <RibbonGroup w={64} name="Add-ins" center><Big icon={<AddInsIcon />} text="Add-ins" /></RibbonGroup>
        <RibbonGroup w={60} center><Big icon={<Copilot id="r" />} text="Copilot" /></RibbonGroup>
        <RibbonGroup w={60} name="Adobe Acrobat" center><Big icon={<PdfIcon />} text={"Create\na PDF"} /></RibbonGroup>
        <RibbonGroup w={113} name="Copilot for Finance (Preview)" center><Big icon={<FinanceIcon />} text={"Copilot for\nFinance (Preview)"} /></RibbonGroup>
        <RibbonEnd><PlainButton aria-label="Collapse ribbon"><WideChevron /></PlainButton></RibbonEnd>
      </Ribbon>

      <FormulaRow>
        <Field $w={100}><FieldInput type="text" aria-label="Name box" defaultValue="H1" /><WideChevron w={11} /></Field>
        <Dots><Ico w={4} h={14} vb="0 0 4 14" stroke="none" fill="#444"><circle cx="2" cy="2" r="1.200" /><circle cx="2" cy="7" r="1.200" /><circle cx="2" cy="12" r="1.200" /></Ico></Dots>
        <FxBox>
          <PlainButton aria-label="Cancel"><Ico w={13} vb="0 0 13 13" stroke="#a6a6a6"><path d="m1 1 11 11M12 1 1 12" /></Ico></PlainButton>
          <PlainButton aria-label="Enter"><Ico w={16} h={13} vb="0 0 16 13" stroke="#a6a6a6"><path d="m1 7 5 5L15 1.500" /></Ico></PlainButton>
          <Fx>fx</Fx>
          <PlainButton aria-label="Function list"><WideChevron w={11} color="#888" /></PlainButton>
        </FxBox>
        <Field><FieldInput $pad={6} type="text" aria-label="Formula bar" defaultValue="Age" /><WideChevron w={10} /></Field>
      </FormulaRow>

      <SheetArea>
        <SheetClip>
          <SheetTable>
            <colgroup><col style={{ width: 25 }} />{COLUMNS.map(([c, w]) => <col key={c} style={{ width: w }} />)}</colgroup>
            <thead>
              <tr>
                <CornerCell aria-label="Select all"><svg width="14" height="13" viewBox="0 0 14 13"><path d="M14 0v13H1z" fill="#b4b4b4" /></svg></CornerCell>
                {COLUMNS.map(([c]) => <ColHead key={c} scope="col">{c}</ColHead>)}
              </tr>
            </thead>
            <tbody>
              {ROWS.map((r) => (
                <tr key={r}>
                  <RowHead scope="row" $tall={r <= 13}>{r}</RowHead>
                  {COLUMNS.map(([c]) => <Cell key={c} {...cellProps(c, r)}>{DATA[r]?.[c]}</Cell>)}
                </tr>
              ))}
            </tbody>
          </SheetTable>
        </SheetClip>
        <VScroll>
          <svg width="8" height="7" viewBox="0 0 8 7"><path d="M4 0l4 7H0z" fill="#6a6a6a" /></svg>
          <VThumb />
          <VRest />
          <svg width="8" height="7" viewBox="0 0 8 7"><path d="M4 7l4-7H0z" fill="#6a6a6a" /></svg>
        </VScroll>
        <Glow />
        <ArrowShape width="222" height="120" viewBox="0 0 222 120" aria-hidden="true">
          <path d="M-4 3.500H163L217 60 163 117.500H-4Z" fill="#ceffce" stroke="#45cb31" strokeWidth="4" />
        </ArrowShape>
        <Banner>Learn vlookup easily and smartly</Banner>
        <Pointer width="13" height="20" viewBox="0 0 13 20" aria-hidden="true">
          <path d="M1 1v15l3.700-3.200 2.500 5.700 2.300-1-2.500-5.500H12z" fill="#fff" stroke="#555" />
        </Pointer>
      </SheetArea>

      <SheetTabs>
        <NavButton aria-label="Previous sheet"><Ico w={8} h={12} vb="0 0 8 12" stroke="#9a9a9a"><path d="M6 1.500 1.500 6 6 10.500" /></Ico></NavButton>
        <NavButton aria-label="Next sheet"><Ico w={8} h={12} vb="0 0 8 12" stroke="#444" sw={1.5}><path d="M1.500 1.500 6 6l-4.500 4.500" /></Ico></NavButton>
        <TabStrip>
          <SheetTab $w={78} $edge>Hlookup</SheetTab>
          <ActiveTab><span>Vlookup</span></ActiveTab>
          <SheetTab $w={78} $edge>Xlookup</SheetTab>
          <SheetTab $w={98} $edge>Xlookup (2)</SheetTab>
          <SheetTab $w={100} $edge>Indexmatch</SheetTab>
          <SheetTab $w={62} $edge>Sumif</SheetTab>
          <SheetTab $w={68} $edge>Sumifs</SheetTab>
          <CutTab $w={23}>Co</CutTab>
        </TabStrip>
        <TabTool aria-label="More sheets"><Ico w={12} h={4} vb="0 0 12 4" stroke="none" fill="#333"><circle cx="2" cy="2" r="1.500" /><circle cx="6" cy="2" r="1.500" /><circle cx="10" cy="2" r="1.500" /></Ico></TabTool>
        <TabTool aria-label="New sheet"><Ico w={12} vb="0 0 12 12"><path d="M6 .8v10.400M.8 6h10.400" /></Ico></TabTool>
        <TabTool aria-label="Tab options"><Ico w={4} h={12} vb="0 0 4 12" stroke="none" fill="#444"><circle cx="2" cy="1.700" r="1.200" /><circle cx="2" cy="6" r="1.200" /><circle cx="2" cy="10.300" r="1.200" /></Ico></TabTool>
        <HScroll>
          <svg width="7" height="8" viewBox="0 0 7 8"><path d="M0 4l7-4v8z" fill="#6a6a6a" /></svg>
          <HThumb />
          <svg width="7" height="8" viewBox="0 0 7 8"><path d="M7 4 0 0v8z" fill="#6a6a6a" /></svg>
        </HScroll>
      </SheetTabs>

      <StatusBar>
        <span>Ready</span>
        <StatusItem $gap={19} aria-label="Macro recording"><Ico w={15} vb="0 0 15 15" sw={1.1}><path d="M6 12.500H1V1.500h13V6M1 4h13M3 6.500h4M3 9h2.500" /><circle cx="10.500" cy="10.500" r="3.500" /><circle cx="10.500" cy="10.500" r="1.200" fill="#444" /></Ico></StatusItem>
        <StatusItem $gap={17}><Ico w={15} vb="0 0 15 15" sw={1.1}><circle cx="6" cy="2.500" r="1.600" /><path d="M1 3.500q0-1.500 1.500-1L6 5l3.500-2.500q1.500-.5 1.500 1L8 6v2M4 6v3l-1.500 4q0 1.500 1.500 1L6 10M7.500 12l2 2 4.500-5" /></Ico>Accessibility: Good to go</StatusItem>
        <Spacer />
        <ViewButton $on aria-label="Normal view"><Ico w={14} vb="0 0 14 14"><path d="M1 1h12v12H1zM1 5h12M1 9h12M5 1v12M9 1v12" /></Ico></ViewButton>
        <ViewButton aria-label="Page layout view"><Ico w={14} vb="0 0 14 14"><path d="M1 1h12v12H1zM3.500 3.500h7v7h-7zM5.500 5.500h3M5.500 7h3M5.500 8.500h3" /></Ico></ViewButton>
        <ViewButton aria-label="Page break view"><Ico w={14} vb="0 0 14 14"><path d="M1 1h12v12H1zM1 8h8V1M5 1v7" /></Ico></ViewButton>
        <StatusItem $gap={5} aria-label="Zoom out"><Ico w={8} vb="0 0 8 8" sw={1}><path d="M.5 4h7" /></Ico></StatusItem>
        <ZoomRange type="range" min="0" max="100" defaultValue="49" aria-label="Zoom level" />
        <StatusItem aria-label="Zoom in"><Ico w={8} vb="0 0 8 8" sw={1}><path d="M.5 4h7M4 .5v7" /></Ico></StatusItem>
        <ZoomText>100%</ZoomText>
      </StatusBar>

      <Taskbar>
        {TASKS.map(([name, icon, o]) => (
          <TaskItem key={name} aria-label={name} $w={o.w} $on={o.on}>{icon}{o.run && <i />}</TaskItem>
        ))}
        <Spacer />
        <Tray $gap={16}>
          <Ico w={12} vb="0 0 12 12" stroke="#333" sw={1.4}><path d="m1 8.500 5-5 5 5" /></Ico>
          <Ico w={18} stroke="#555" sw={1.3}><path d="M1.500 7Q3.500 1.500 9 1.500q4 0 6.500 4M16 2v4h-4M6 11H2v4M2 11q2 5 6 5.500" /><circle cx="13" cy="13" r="4" fill="#f09a1a" stroke="none" /></Ico>
        </Tray>
        <Tray $gap={17}>
          <Ico w={14} h={18} vb="0 0 14 18" stroke="#2a56a8" sw={1.4}><rect x="4.500" y="1" width="5" height="10" rx="2.500" fill="#b7c8e8" /><path d="M1.500 8q0 5.500 5.500 5.500T12.500 8M7 13.500V17" /></Ico>
        </Tray>
        <Tray $gap={8}>
          <Ico w={16} h={14} vb="0 0 16 14" stroke="#333" sw={1.3}><path d="M1 5q7-6.500 14 0M3.300 7.700q4.700-4.400 9.400 0M5.500 10.300q2.500-2.200 5 0" /><circle cx="8" cy="12" r="1" fill="#333" /></Ico>
          <Ico w={17} h={14} vb="0 0 17 14" stroke="#333"><path d="M1 5v4h2.500L7 12V2L3.500 5zM9.500 5q1.200 2 0 4M11.800 3.300q2.500 3.700 0 7.400M14 1.700q3.700 5.300 0 10.600" /></Ico>
          <Ico w={20} h={12} vb="0 0 20 12" stroke="#333"><rect x="1" y="1" width="16" height="10" rx="2.500" /><rect x="3" y="3" width="9" height="6" rx="1" fill="#222" stroke="none" /><path d="M19 4.500v3" /></Ico>
        </Tray>
        <Clock>1:55 am<br />10/03/2026</Clock>
      </Taskbar>
    </Page>
  );
}
